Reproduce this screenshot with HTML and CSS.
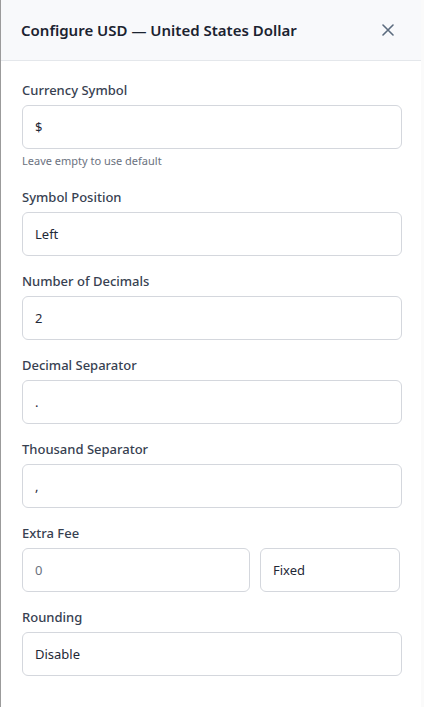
FILE: index.html
```html
<!DOCTYPE html>
<html lang="en">
<head>
    <meta charset="UTF-8">
    <meta name="viewport" content="width=device-width, initial-scale=1.0">
    <title>Configure USD</title>
    <link rel="stylesheet" href="styles.css">
</head>
<body>
    <div class="drawer">
        <div class="drawer-header">
            <h2>Configure USD — United States Dollar</h2>
            <button class="close-btn" aria-label="Close">
                <svg width="12" height="12" viewBox="0 0 12 12"><path d="M1 1L11 11M11 1L1 11" stroke="#5b6b7e" stroke-width="1.6" stroke-linecap="round"/></svg>
            </button>
        </div>
        <div class="drawer-body">
            <div class="field">
                <label>Currency Symbol</label>
                <input type="text" value="$">
                <div class="hint">Leave empty to use default</div>
            </div>
            <div class="field">
                <label>Symbol Position</label>
                <div class="select">Left</div>
            </div>
            <div class="field">
                <label>Number of Decimals</label>
                <input type="text" value="2">
            </div>
            <div class="field">
                <label>Decimal Separator</label>
                <input type="text" value=".">
            </div>
            <div class="field">
                <label>Thousand Separator</label>
                <input type="text" value=",">
            </div>
            <div class="field">
                <label>Extra Fee</label>
                <div class="fee-row">
                    <input type="text" placeholder="0">
                    <div class="select">Fixed</div>
                </div>
            </div>
            <div class="field">
                <label>Rounding</label>
                <div class="select">Disable</div>
            </div>
        </div>
    </div>
</body>
</html>
```

FILE: styles.css
```css
body {
    margin: 0;
    background-color: #fafafa;
    font-family: "Noto Sans", "Open Sans", sans-serif;
    color: #1f2937;
}
.drawer {
    width: 421px;
    height: 707px;
    box-sizing: border-box;
    background-color: #fff;
    border-left: 1px solid #9b9b9b;
}
.drawer-header {
    height: 61px;
    box-sizing: border-box;
    background-color: #f8f9fb;
    border-bottom: 1px solid #e4e7eb;
    display: flex;
    align-items: center;
    justify-content: space-between;
    padding: 0 27px 0 20px;
}
.drawer-header h2 {
    margin: 0;
    font-size: 15px;
    font-weight: 600;
    color: #1b2330;
}
.close-btn {
    background: none;
    border: none;
    padding: 0;
    display: flex;
    cursor: pointer;
}
.drawer-body {
    padding: 20px 19px 0 21px;
}
.field {
    margin-bottom: 16px;
}
.field label {
    display: block;
    font-size: 13px;
    font-weight: 500;
    line-height: 18px;
    color: #374151;
    margin-bottom: 6px;
}
input,
.select {
    display: block;
    width: 100%;
    height: 44px;
    box-sizing: border-box;
    border: 1px solid #d4d7dd;
    border-radius: 6px;
    padding: 0 12px;
    font-family: inherit;
    font-size: 13px;
    color: #1f2937;
    background-color: #fff;
    line-height: 42px;
    outline: none;
}
input::placeholder {
    color: #6b7280;
}
.hint {
    font-size: 11px;
    line-height: 16px;
    color: #6b7280;
    margin-top: 4px;
    padding-bottom: 3px;
}
.fee-row {
    display: grid;
    grid-template-columns: 1fr 140px;
    gap: 10px;
    margin-right: 2px;
}
```
